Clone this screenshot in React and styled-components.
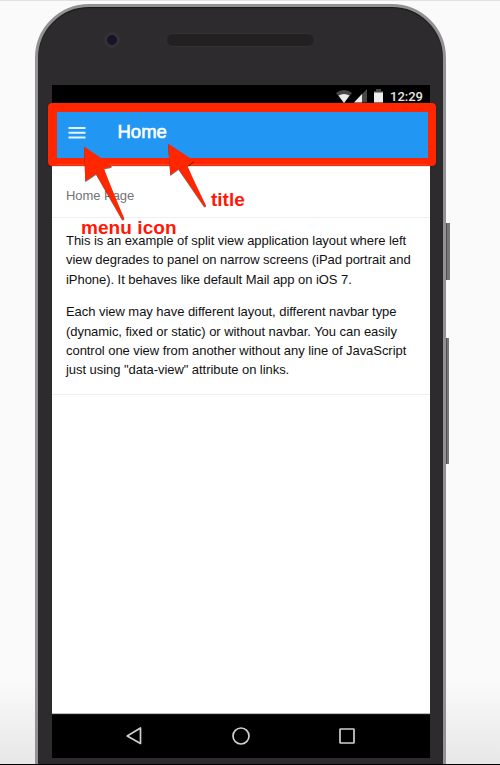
import React from "react";
import styled, { createGlobalStyle } from "styled-components";

const GlobalStyle = createGlobalStyle`
  * { box-sizing: border-box; }
  body { margin: 0; background: #fafafa; }
`;

const Page = styled.main`
  position: relative;
  width: 500px;
  height: 765px;
  padding-top: 4px;
  padding-left: 34.5px;
  display: flex;
  align-items: flex-start;
  overflow: hidden;
  background: linear-gradient(#fafafa 0 680px, #e7e7e7 765px);
  box-shadow: inset 0 1px #e2e2e2;
  border-bottom: 1px solid #000;
  font-family: "Liberation Sans", Arial, sans-serif;
`;

const Phone = styled.section`
  width: 411.5px;
  height: 830px;
  flex: none;
  padding: 25px 13px 0 14px;
  border: 3px solid #929292;
  border-radius: 54px 54px 0 0;
  background: #2d2b2d;
  box-shadow: inset 0 1px 1px #191919;
`;

const Hardware = styled.div`
  display: flex;
  align-items: center;
  height: 53px;
  padding: 0 0 37px 52.5px;
`;

const Camera = styled.span`
  width: 16px;
  height: 16px;
  border: 3px solid #323234;
  border-radius: 50%;
  background: #1b1029;
`;

const Speaker = styled.span`
  width: 149px;
  height: 14px;
  margin-left: 45.6px;
  border: 1px solid #313131;
  border-radius: 7px;
  background: #222021;
`;

const Screen = styled.div`
  display: flex;
  flex-direction: column;
  width: 378.5px;
  height: 673px;
  background: #000;
`;

const StatusBar = styled.div`
  display: flex;
  justify-content: flex-end;
  align-items: center;
  height: 20px;
  padding: 2px 7px 0 0;
  color: #e4e4e4;
  font: 500 13px/17px Roboto, sans-serif;
`;

const StatusIcons = styled.svg`
  width: 48px;
  height: 17px;
  margin-right: 6px;
`;

const NavBar = styled.header`
  position: relative;
  display: flex;
  align-items: center;
  height: 63px;
  margin: -2px -6px 0 -4px;
  padding: 0 0 6px 11px;
  border: 9px solid #ff2600;
  border-right-width: 8px;
  border-bottom-width: 8px;
  border-radius: 4px;
  background: #2196f3;
  box-shadow: 0 0 1px #300;

  &::after {
    content: "";
    position: absolute;
    inset: auto 0 -7px;
    height: 1px;
    background: #f5452f;
  }
`;

const MenuIcon = styled.svg`
  width: 18px;
  height: 14px;
  margin-top: 1px;
`;

const Title = styled.h1`
  margin: 0 0 0 32px;
  color: #fff;
  font-size: 18.5px;
  font-weight: 400;
  line-height: 24px;
  -webkit-text-stroke: .6px #fff;
`;

const Content = styled.article`
  flex: none;
  height: 548px;
  background: #fff;
  border-bottom: 1px solid #bbb;
`;

const BlockTitle = styled.h2`
  margin: 0;
  height: 52px;
  padding: 20px 14.5px 0;
  border-bottom: 1px solid #efefef;
  color: #747474;
  font-size: 13px;
  font-weight: 400;
  line-height: 20px;
  letter-spacing: -.05px;
`;

const ContentBlock = styled.div`
  height: 177px;
  padding: 13px 14.5px;
  border-bottom: 1px solid #efefef;
`;

const Paragraph = styled.p`
  margin: 0 0 13px;
  color: #111;
  font-size: 13px;
  line-height: 19.4px;
  letter-spacing: -.05px;
  white-space: pre-line;
`;

const SystemNav = styled.nav`
  display: flex;
  justify-content: space-between;
  align-items: center;
  flex: 1;
  padding: 0 73px 2px 72.5px;
  border-top: 1px solid #161616;
`;

const NavIcon = styled.svg`
  width: 20px;
  height: 20px;
  fill: none;
  stroke: #d0d0d0;
  stroke-width: 1.7;
  stroke-linejoin: round;
`;

const SideButton = styled.span`
  position: absolute;
  left: 446px;
  top: ${({ $top }) => $top}px;
  width: ${({ $width }) => $width}px;
  height: ${({ $height }) => $height}px;
  background: #777;
  border-left: 1px solid #505050;
`;

const Arrows = styled.svg`
  position: absolute;
  left: 80px;
  top: 140px;
  width: 130px;
  height: 84px;
  fill: #ff2600;
  filter: drop-shadow(0 1px .7px #0008);
`;

const Label = styled.span`
  position: absolute;
  left: ${({ $left }) => $left}px;
  top: ${({ $top }) => $top}px;
  color: #ff1708;
  font-size: 19px;
  font-weight: 700;
  line-height: 22px;
  letter-spacing: ${({ $spacing }) => $spacing}px;
  white-space: nowrap;
  text-shadow: 0 0 1px #fff, 0 0 1px #fff;
`;

export default function App() {
  return (
    <>
      <GlobalStyle />
      <Page>
        <Phone>
          <Hardware>
            <Camera />
            <Speaker />
          </Hardware>
          <Screen>
            <StatusBar>
              <StatusIcons viewBox="0 0 48 17">
                <path d="M0 5Q8-1 16 5L8 15Z" fill="#484848" />
                <path d="M2.5 7.5Q8 4.5 13.5 7.5L8 15Z" fill="#ededed" />
                <path d="M18 14.5L31 1V14.5Z" fill="#484848" />
                <path d="M18 14.5L26 6V14.5Z" fill="#ededed" />
                <path d="M38 3H40V1H45V3H47V14.5H38Z" fill="#484848" />
                <path d="M38 4.5H47V14.5H38Z" fill="#ededed" />
              </StatusIcons>
              <span>12:29</span>
            </StatusBar>
            <NavBar>
              <MenuIcon viewBox="0 0 18 14">
                <path d="M.5 2H17.5M.5 6.8H17.5M.5 11.6H17.5" stroke="#e5f4ff" strokeWidth="2" />
              </MenuIcon>
              <Title>Home</Title>
            </NavBar>
            <Content>
              <BlockTitle>Home Page</BlockTitle>
              <ContentBlock>
                <Paragraph>
                  {"This is an example of split view application layout where left\nview degrades to panel on narrow screens (iPad portrait and\niPhone). It behaves like default Mail app on iOS 7."}
                </Paragraph>
                <Paragraph>
                  {"Each view may have different layout, different navbar type\n(dynamic, fixed or static) or without navbar. You can easily\ncontrol one view from another without any line of JavaScript\njust using \"data-view\" attribute on links."}
                </Paragraph>
              </ContentBlock>
            </Content>
            <SystemNav>
              <NavIcon viewBox="0 0 20 20"><path d="M3.2 10L16.5 2V17.5Z" /></NavIcon>
              <NavIcon viewBox="0 0 20 20"><circle cx="10" cy="10" r="8" /></NavIcon>
              <NavIcon viewBox="0 0 20 20"><rect x="3" y="3" width="14" height="14" rx=".5" /></NavIcon>
            </SystemNav>
          </Screen>
        </Phone>
        <SideButton $top={223} $width={4} $height={57} />
        <SideButton $top={338} $width={3} $height={126} />
        <Arrows viewBox="80 140 130 84">
          <path d="M84 146.5L101 158L112 166.7L104 168.5Q110 185 124.3 218.5Q123.5 220.5 121.7 218.7L96 174L85.3 181.3Z" />
          <path d="M168 143.5L194.5 161L187.5 166Q193 179 206 205.5Q205 207.5 203.5 205.5L178.5 169L170.3 175Z" />
        </Arrows>
        <Label $left={81} $top={217} $spacing={0.08}>menu icon</Label>
        <Label $left={211} $top={188.5} $spacing={0}>title</Label>
      </Page>
    </>
  );
}
